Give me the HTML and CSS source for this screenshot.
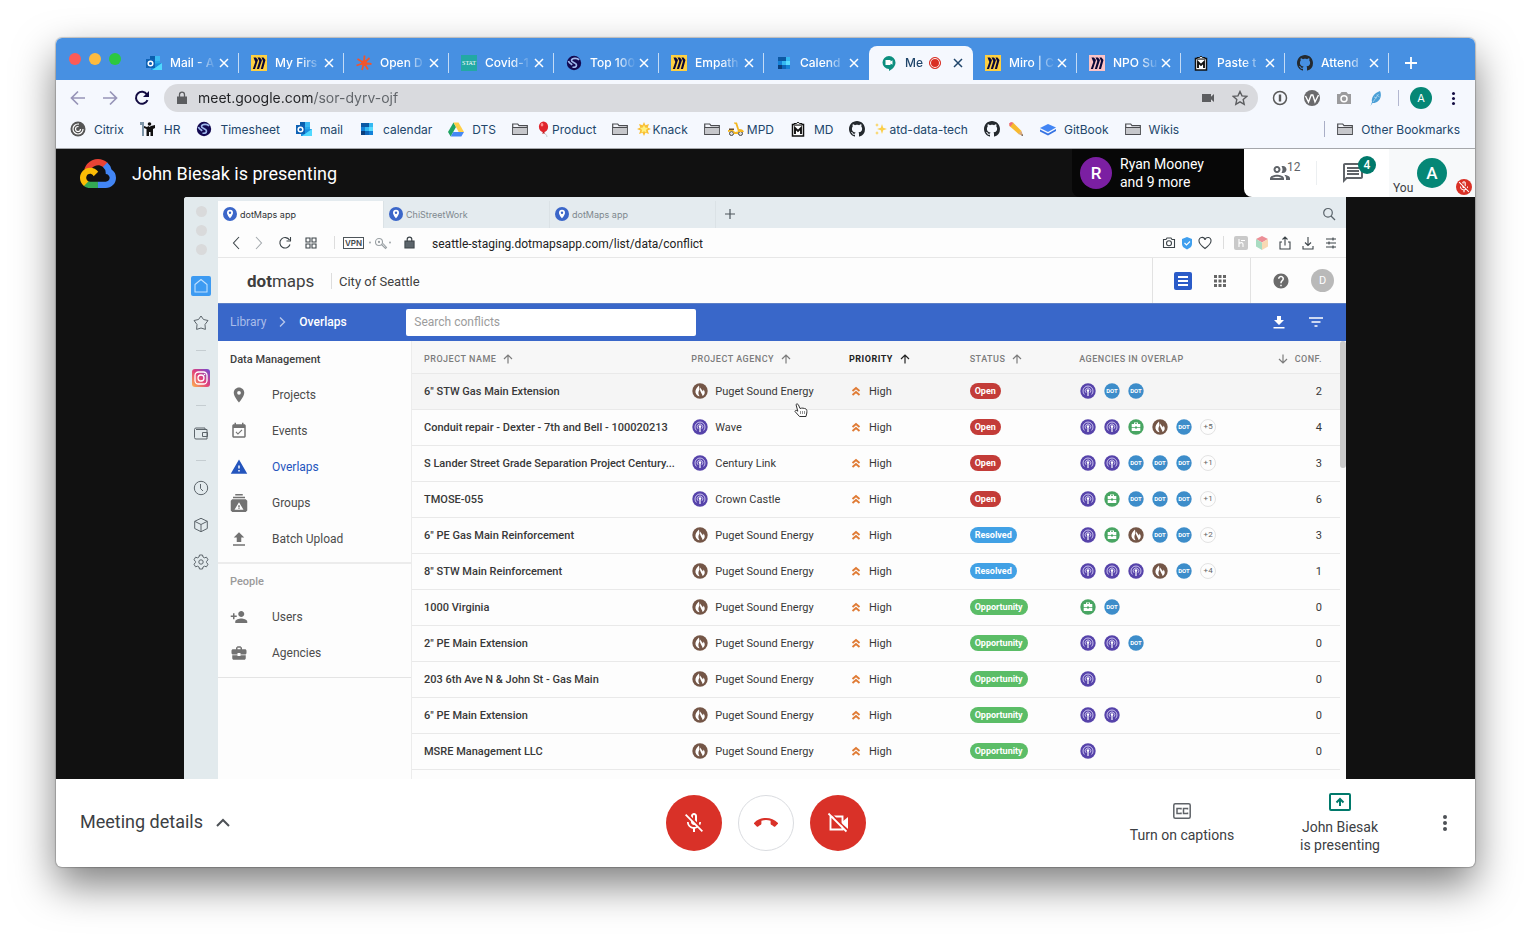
FILE: index.html
```html
<!DOCTYPE html>
<html lang="en">
<head>
<meta charset="utf-8">
<title>Meet - sor-dyrv-ojf</title>
<link rel="stylesheet" href="styles.css">
</head>
<body>
<svg class="defs" aria-hidden="true">
  <defs>
    <symbol id="x" viewBox="0 0 10 10"><path d="M1 1l8 8M9 1l-8 8" stroke="currentColor" stroke-width="1.5" fill="none"/></symbol>
    <symbol id="outlook" viewBox="0 0 16 16"><path d="M4 1h10v9H4z" fill="#28a8ea"/><path d="M4 1h5v5H4z" fill="#0a5fae"/><path d="M9 1h5v5H9z" fill="#3cb9f3"/><path d="M5 9l11-1v7H5z" fill="#1a8ee0"/><path d="M6 15l10-7v7z" fill="#50d9ff"/><path d="M0 4h9v9H0z" fill="#0f62b5"/><circle cx="4.5" cy="8.500" r="2.300" fill="none" stroke="#fff" stroke-width="1.500"/></symbol>
    <symbol id="miro" viewBox="0 0 16 16"><path d="M2.500 2.500h2.500L7 5l-3 9H1.800l2.500-7zM6.500 2.500H9L11 5 8 14H5.800l2.500-8zM10.500 2.500h2L14.500 5 12 14H9.800L12 6z" fill="#0b0838"/></symbol>
    <symbol id="hub" viewBox="0 0 16 16"><path d="M8 8L8.500.500M8 8l5.500-5M8 8l7.500 1M8 8l4 6.500M8 8l-2 7M8 8L.500 10.500M8 8L1.500 4" stroke="#f2552c" stroke-width="1.800"/><circle cx="8" cy="8" r="2.800" fill="#f2552c"/></symbol>
    <symbol id="globe" viewBox="0 0 16 16"><circle cx="8" cy="8" r="7.200" fill="#130a52"/><path d="M13 5C11.500 2.500 6 3 5.500 5.200S10.500 7.500 10.500 10 8 12.500 6.500 12M2.500 6c1 3 2.500 2 3.500 4" fill="none" stroke="#9fb8ec" stroke-width="1.700"/></symbol>
    <symbol id="cal" viewBox="0 0 16 16"><path d="M2 2h12v12H2z" fill="#1482d8"/><path d="M2 2h8v4H2z" fill="#0c59a4"/><path d="M10 2h4v4h-4zM6 6h4v4H6z" fill="#35b8f1"/><path d="M10 6h4v4h-4z" fill="#58dcff"/><path d="M2 10h4v4H2z" fill="#0a3f7d"/><path d="M6 10h4v4H6z" fill="#0d66ba"/></symbol>
    <symbol id="meet" viewBox="0 0 16 16"><path d="M8 1a6.500 6.500 0 0 0 0 13v2c3-1.500 6.500-4.500 6.500-8.500A6.500 6.500 0 0 0 8 1z" fill="#0d8f7f"/><path d="M4.500 5h5v1.500l2-1.200v4.400l-2-1.200V10h-5z" fill="#fff"/></symbol>
    <symbol id="mark" viewBox="0 0 16 16"><path d="M2.500 3.500h11V15h-11z" fill="#fff" stroke="#111" stroke-width="1.500"/><path d="M4 4V2.500h2.500a1.600 1.600 0 0 1 3 0H12V4z" fill="#fff" stroke="#111"/><path d="M5 13V7l3 3 3-3v6" fill="none" stroke="#111" stroke-width="1.900"/></symbol>
    <symbol id="github" viewBox="0 0 16 16"><path d="M8 0C3.580 0 0 3.580 0 8c0 3.540 2.290 6.530 5.470 7.590.4.070.55-.17.55-.38 0-.19-.01-.82-.01-1.490-2.010.37-2.530-.49-2.690-.94-.09-.23-.48-.94-.82-1.130-.28-.15-.68-.52-.01-.53.63-.01 1.080.58 1.230.82.72 1.210 1.870.87 2.330.66.07-.52.28-.87.51-1.070-1.780-.2-3.640-.89-3.640-3.950 0-.87.31-1.590.82-2.150-.08-.2-.36-1.020.08-2.120 0 0 .67-.21 2.200.82.64-.18 1.320-.27 2-.27s1.360.09 2 .27c1.530-1.040 2.200-.82 2.200-.82.44 1.100.16 1.920.08 2.120.51.56.82 1.270.82 2.150 0 3.070-1.870 3.750-3.650 3.950.29.25.54.73.54 1.480 0 1.070-.01 1.930-.01 2.200 0 .21.15.46.55.38A8.010 8.010 0 0 0 16 8c0-4.420-3.580-8-8-8z" fill="#24292e"/></symbol>
    <symbol id="citrix" viewBox="0 0 16 16"><circle cx="8" cy="8" r="7.500" fill="#555"/><circle cx="8" cy="8" r="5" fill="none" stroke="#fff" stroke-width="1.200" stroke-dasharray="24 8"/><circle cx="8" cy="8" r="2.500" fill="none" stroke="#fff" stroke-width="1.200" stroke-dasharray="12 4"/></symbol>
    <symbol id="hr" viewBox="0 0 16 16"><path d="M0 1h4v14H2V4H0z" fill="#7d95a8"/><path d="M4 5l3 1 1.500-1 1 1 1.500-1 4-1v3l-2 1v7h-2.500v-4H9v4H6.500V8L4 7z" fill="#111"/><circle cx="9.500" cy="3" r="1.800" fill="#111"/></symbol>
    <symbol id="drive" viewBox="0 0 16 16"><path d="M5.500 1.500L0 11l2.700 4.500L8 6z" fill="#1fa463"/><path d="M5.500 1.500h5L16 11h-5.300z" fill="#ffcf48"/><path d="M5.300 11H16l-2.700 4.500H2.700z" fill="#4688f4"/></symbol>
    <symbol id="folder" viewBox="0 0 16 16"><path d="M.7 13.500V3h5l1.300 1.700h8.300v8.800z" fill="#f4f6fb" stroke="#4b4c50" stroke-width="1.200"/><path d="M1.300 6.500h13.400v6.400H1.300z" fill="#c6c7cb"/><path d="M.7 6.500h14.600" stroke="#4b4c50"/></symbol>
    <symbol id="balloon" viewBox="0 0 14 16"><path d="M7 11c0 2 3 2 3 5" fill="none" stroke="#aaa" stroke-width=".6"/><path d="M6 11L5 12.500h3L7 11z" fill="#b9161b"/><ellipse cx="6.500" cy="5.800" rx="4.600" ry="5.400" fill="#e0242b"/><ellipse cx="5" cy="3.800" rx="1.300" ry="1.800" fill="#ff8d8d"/></symbol>
    <symbol id="sun" viewBox="0 0 14 16"><path d="M7 1l1.500 3.300L12 3l-1.300 3.500L14 8l-3.300 1.500L12 13l-3.500-1.300L7 15l-1.500-3.300L2 13l1.300-3.500L0 8l3.300-1.500L2 3l3.500 1.300z" fill="#f9bf36"/><path d="M7 4l1.200 2.600 2.800.3L9 8.900l.6 2.800L7 10.300l-2.600 1.400.6-2.800-2-2 2.800-.3z" fill="#fff07c"/></symbol>
    <symbol id="scooter" viewBox="0 0 16 16"><circle cx="3.500" cy="12.500" r="2" fill="#ddd" stroke="#444"/><circle cx="12.500" cy="12.500" r="2" fill="#ddd" stroke="#444"/><path d="M0 9h5l2 2 3-.5L7.500 3 6 2.500V1.500h3L11 8c2.500-.3 4.500 1 5 3H10v2H6L4.500 10 0 11z" fill="#f4b720"/><path d="M1 7.500h5V9H1z" fill="#6a4a28"/></symbol>
    <symbol id="sparkle" viewBox="0 0 14 16"><path d="M8 3l1.200 3.800L13 8l-3.800 1.200L8 13 6.800 9.200 3 8l3.800-1.200zM3 2l.6 1.600L5 4l-1.400.5L3 6l-.6-1.500L1 4l1.400-.4zM3 10l.6 1.600L5 12l-1.400.5L3 14l-.6-1.500L1 12l1.400-.4z" fill="#fbcf4a"/></symbol>
    <symbol id="pencil" viewBox="0 0 16 16"><path d="M2.500 2L5 1.500l8.500 8.500-3 3L1.500 5z" fill="#f7b92f"/><path d="M1.500 5L1 2.500 3 1l2.300.8L2.500 5.500z" fill="#ee6e78"/><path d="M13.500 10L15 15l-4.800-2z" fill="#d9a878"/><path d="M14.300 13L15 15l-1.700-.8z" fill="#333"/></symbol>
    <symbol id="gitbook" viewBox="0 0 16 16"><path d="M0 7l8-4 8 3.500L8 11z" fill="#4285f4"/><path d="M0 8.500l8 4 8-4.500v2L8 14.500l-8-4z" fill="#3472e2"/></symbol>
    <symbol id="lock" viewBox="0 0 12 14"><path d="M1 5.500h10V13H1z"/><path d="M3.500 6V3.700a2.500 2.500 0 0 1 5 0V6" fill="none" stroke="currentColor" stroke-width="1.300"/></symbol>
    <symbol id="micoff" viewBox="0 0 24 24"><path d="M19 11h-1.700c0 .74-.16 1.430-.43 2.050l1.230 1.230c.56-.98.9-2.090.9-3.280zM15 5c0-1.660-1.340-3-3-3S9 3.340 9 5v.200l6 6zM11 5a1 1 0 0 1 2 0v4.200l-2-2zM4.270 3L3 4.270l6 6V11c0 1.660 1.340 3 3 3 .22 0 .44-.03.65-.08l1.660 1.660c-.71.33-1.500.52-2.310.52-2.760 0-5.300-2.100-5.300-5.100H5c0 3.410 2.720 6.230 6 6.720V21h2v-3.280c.91-.13 1.770-.45 2.540-.9L19.730 21 21 19.730z"/></symbol>
    <symbol id="pin" viewBox="0 0 24 24"><path d="M12 2C8.130 2 5 5.130 5 9c0 5.250 7 13 7 13s7-7.750 7-13c0-3.870-3.130-7-7-7zm0 9.500a2.500 2.500 0 1 1 0-5 2.500 2.500 0 0 1 0 5z"/></symbol>
    <symbol id="case" viewBox="0 0 24 24"><path d="M10 16v-1H3v4c0 1.110.89 2 2 2h14c1.110 0 2-.89 2-2v-4h-7v1h-4zm10-9h-4V5l-2-2h-4L8 5v2H4c-1.100 0-2 .9-2 2v3c0 1.110.89 2 2 2h6v-2h4v2h6c1.100 0 2-.9 2-2V9c0-1.100-.9-2-2-2zm-6 0h-4V5h4v2z"/></symbol>
    <symbol id="dotpin" viewBox="0 0 14 14"><circle cx="7" cy="7" r="7" fill="#3b66c9"/><path d="M7 2.700a3 3 0 0 0-3 3C4 8 7 11.300 7 11.300S10 8 10 5.700a3 3 0 0 0-3-3z" fill="#fff"/><circle cx="7" cy="5.800" r="1.200" fill="#3b66c9"/></symbol>
    <symbol id="up" viewBox="0 0 10 10"><path d="M5 9.500V1M1 5l4-4 4 4" fill="none" stroke="currentColor" stroke-width="1.200"/></symbol>
    <symbol id="down" viewBox="0 0 10 10"><path d="M5 .5V9M1 5l4 4 4-4" fill="none" stroke="currentColor" stroke-width="1.200"/></symbol>
    <symbol id="high" viewBox="0 0 10 10"><path d="M1.500 5L5 2l3.500 3M1.500 9L5 6l3.500 3" fill="none" stroke="#e07b35" stroke-width="1.900"/></symbol>
    <symbol id="wave" viewBox="0 0 16 16"><circle cx="8" cy="8" r="7.700" fill="#5643aa"/><path d="M4.400 11.500a5 5 0 1 1 7.200 0M6 9.800a2.800 2.800 0 1 1 4 0" fill="none" stroke="#d6cff4" stroke-width=".9"/><circle cx="8" cy="7.500" r="1.200" fill="#fff"/><path d="M7.400 8h1.200v5H7.400z" fill="#fff"/></symbol>
    <symbol id="fire" viewBox="0 0 16 16"><circle cx="8" cy="8" r="7.700" fill="#745647"/><path d="M7 2.500C4.500 5 3 7 3.500 9.500S6 13 7.500 13.300C6 11 6 9 7.500 6.500z" fill="#fff"/><path d="M8 4.500l3 4 .5-2c2 2.500 1.500 5-1 6.500C10.500 10.500 7.500 9 8 4.500z" fill="#fff"/></symbol>
    <symbol id="dot" viewBox="0 0 16 16"><circle cx="8" cy="8" r="7.700" fill="#3d8dca"/><text x="8" y="10" text-anchor="middle" class="dot-text">DOT</text></symbol>
    <symbol id="work" viewBox="0 0 16 16"><circle cx="8" cy="8" r="7.700" fill="#48a562"/><path d="M6 5V3.500h4V5h2.300v3H9V7.500H7V8H3.700V5zm1 0h2v-.700H7zM3.700 8.700H7v.8h2v-.8h3.300V12H3.700z" fill="#fff"/></symbol>
  </defs>
</svg>

<div class="window">
  <header class="chrome">
    <div class="tabstrip">
      <div class="lights"><i class="red"></i><i class="amber"></i><i class="green"></i></div>
      <nav class="tabs">
        <a class="tab" href="#"><svg class="i16"><use href="#outlook"/></svg><span>Mail - A</span><svg class="i10"><use href="#x"/></svg></a>
        <a class="tab" href="#"><svg class="i16 yellow"><use href="#miro"/></svg><span>My Firs</span><svg class="i10"><use href="#x"/></svg></a>
        <a class="tab" href="#"><svg class="i16"><use href="#hub"/></svg><span>Open D</span><svg class="i10"><use href="#x"/></svg></a>
        <a class="tab" href="#"><b class="i16 stat">STAT</b><span>Covid-1</span><svg class="i10"><use href="#x"/></svg></a>
        <a class="tab" href="#"><svg class="i16"><use href="#globe"/></svg><span>Top 100</span><svg class="i10"><use href="#x"/></svg></a>
        <a class="tab" href="#"><svg class="i16 yellow"><use href="#miro"/></svg><span>Empath</span><svg class="i10"><use href="#x"/></svg></a>
        <a class="tab last" href="#"><svg class="i16"><use href="#cal"/></svg><span>Calend</span><svg class="i10"><use href="#x"/></svg></a>
        <a class="tab narrow active" href="#" aria-current="page"><svg class="i16"><use href="#meet"/></svg><span>Me</span><i class="rec"></i><svg class="i10"><use href="#x"/></svg></a>
        <a class="tab narrow" href="#"><svg class="i16 yellow"><use href="#miro"/></svg><span>Miro | C</span><svg class="i10"><use href="#x"/></svg></a>
        <a class="tab narrow" href="#"><svg class="i16 pink"><use href="#miro"/></svg><span>NPO Su</span><svg class="i10"><use href="#x"/></svg></a>
        <a class="tab narrow" href="#"><svg class="i16"><use href="#mark"/></svg><span>Paste t</span><svg class="i10"><use href="#x"/></svg></a>
        <a class="tab narrow" href="#"><svg class="i16"><use href="#github"/></svg><span>Attend</span><svg class="i10"><use href="#x"/></svg></a>
      </nav>
      <button class="newtab" aria-label="New tab"><svg viewBox="0 0 12 12"><path d="M6 0v12M0 6h12" stroke="currentColor" stroke-width="1.800"/></svg></button>
    </div>

    <div class="toolbar">
      <div class="nav">
        <button class="faded" aria-label="Back"><svg viewBox="0 0 16 16"><path d="M15 8H2M8 1.500L1.500 8 8 14.500" fill="none" stroke="currentColor" stroke-width="1.700"/></svg></button>
        <button class="faded" aria-label="Forward"><svg viewBox="0 0 16 16"><path d="M1 8h13M8 1.500L14.500 8 8 14.500" fill="none" stroke="currentColor" stroke-width="1.700"/></svg></button>
        <button aria-label="Reload"><svg viewBox="0 0 16 16"><path d="M13.500 10.200A6 6 0 1 1 13 4.500" fill="none" stroke="currentColor" stroke-width="2"/><path d="M15 1v6H9z" fill="currentColor"/></svg></button>
      </div>
      <div class="omnibox">
        <svg class="lock"><use href="#lock"/></svg>
        <input type="text" aria-label="Address" value="meet.google.com/sor-dyrv-ojf">
        <svg class="i16" viewBox="0 0 16 16"><path d="M2 4h9v2.800L14 4v8l-3-2.800V12H2z" fill="#5c5d60"/></svg>
        <svg class="i16" viewBox="0 0 16 16"><path d="M8 1.500l2 4.400 4.700.5-3.500 3.200 1 4.700L8 11.900l-4.200 2.400 1-4.700L1.300 6.400 6 5.900z" fill="none" stroke="#5c5d60" stroke-width="1.400"/></svg>
      </div>
      <div class="exts">
        <svg class="i16" viewBox="0 0 16 16"><circle cx="8" cy="8" r="6.500" fill="none" stroke="#5a5a5a" stroke-width="1.500"/><path d="M6.800 4.500h2.400v7H6.800z" fill="#5a5a5a"/></svg>
        <svg class="i16" viewBox="0 0 16 16"><circle cx="8" cy="8" r="8" fill="#6a6a6c"/><path d="M1.500 6l3 6 2.700-7h1.600l2.200 7 3.500-7" fill="none" stroke="#fff" stroke-width="1.400"/></svg>
        <svg class="i16" viewBox="0 0 16 16"><path d="M1 4h3l1.500-2h5L12 4h3v10H1z" fill="#9b9b9d"/><circle cx="8" cy="8.800" r="3" fill="none" stroke="#fff" stroke-width="1.500"/></svg>
        <svg class="i16" viewBox="0 0 16 16"><path d="M12 1c2 4 .5 9-3 11-2 1-3 1-4.500 1l-2 3 1.500-4C3 8 6 3 12 1z" fill="#4a9fd6"/><path d="M10.500 4L5 12M6 7l3 1M8.500 5l3 2" stroke="#b8dcf3" stroke-width=".7"/></svg>
      </div>
      <b class="me">A</b>
      <button class="menu" aria-label="Chrome menu"><i></i><i></i><i></i></button>
    </div>

    <nav class="bookmarks">
      <a href="#"><svg class="i16"><use href="#citrix"/></svg>Citrix</a>
      <a href="#"><svg class="i16"><use href="#hr"/></svg>HR</a>
      <a href="#"><svg class="i16"><use href="#globe"/></svg>Timesheet</a>
      <a href="#"><svg class="i16"><use href="#outlook"/></svg>mail</a>
      <a href="#"><svg class="i16"><use href="#cal"/></svg>calendar</a>
      <a href="#"><svg class="i16"><use href="#drive"/></svg>DTS</a>
      <a href="#"><svg class="i16"><use href="#folder"/></svg><span><svg class="emoji"><use href="#balloon"/></svg>Product</span></a>
      <a href="#"><svg class="i16"><use href="#folder"/></svg><span><svg class="emoji"><use href="#sun"/></svg>Knack</span></a>
      <a href="#"><svg class="i16"><use href="#folder"/></svg><span class="spaced"><svg class="emoji"><use href="#scooter"/></svg>MPD</span></a>
      <a href="#"><svg class="i16"><use href="#mark"/></svg>MD</a>
      <a href="#"><svg class="i16"><use href="#github"/></svg><span><svg class="emoji"><use href="#sparkle"/></svg>atd-data-tech</span></a>
      <a href="#" aria-label="Edit"><svg class="i16"><use href="#github"/></svg><svg class="i16"><use href="#pencil"/></svg></a>
      <a href="#"><svg class="i16"><use href="#gitbook"/></svg>GitBook</a>
      <a href="#"><svg class="i16"><use href="#folder"/></svg>Wikis</a>
      <a class="other" href="#"><svg class="i16"><use href="#folder"/></svg>Other Bookmarks</a>
    </nav>
  </header>

  <main class="stage">
    <div class="stagebar">
      <svg class="gcp" viewBox="0 0 256 206"><path fill="#ea4335" d="M170.252 56.819l22.253-22.253 1.483-9.370C153.437-11.677 88.976-7.496 52.420 33.920 42.267 45.423 34.734 59.764 30.717 74.573l7.970-1.123 44.505-7.340 3.436-3.513c19.797-21.742 53.270-24.667 76.128-6.168z"/><path fill="#4285f4" d="M224.205 73.918a100.249 100.249 0 0 0-30.217-48.722l-31.232 31.232a55.515 55.515 0 0 1 20.379 44.037v5.544c15.351 0 27.797 12.445 27.797 27.796 0 15.352-12.446 27.485-27.797 27.485h-55.671l-5.466 5.934v33.340l5.466 5.231h55.670c39.930.311 72.553-31.494 72.864-71.424a72.303 72.303 0 0 0-31.793-60.453"/><path fill="#34a853" d="M71.870 205.796h55.593V161.290H71.870a27.275 27.275 0 0 1-11.400-2.498l-7.887 2.420-22.409 22.253-1.952 7.574c12.567 9.489 27.900 14.825 43.647 14.757"/><path fill="#fbbc05" d="M71.870 61.425C31.940 61.664-.237 94.228.001 134.158a72.301 72.301 0 0 0 28.222 56.880l32.248-32.246c-13.990-6.322-20.208-22.786-13.887-36.776 6.320-13.990 22.786-20.208 36.775-13.888a27.796 27.796 0 0 1 13.887 13.888l32.248-32.248A72.224 72.224 0 0 0 71.870 61.425"/></svg>
      <h1>John Biesak is presenting</h1>
      <div class="speaker"><b class="avatar purple">R</b><p>Ryan Mooney<br>and 9 more</p></div>
      <div class="panel">
        <button aria-label="Show everyone"><svg class="i24" viewBox="0 0 24 24"><path fill="#5f6368" d="M9 13.750c-2.340 0-7 1.170-7 3.500V19h14v-1.750c0-2.330-4.660-3.500-7-3.500zM4.340 17c.84-.58 2.870-1.250 4.660-1.250s3.820.67 4.660 1.250H4.340zM9 12c1.930 0 3.500-1.570 3.500-3.500S10.930 5 9 5 5.500 6.570 5.500 8.500 7.070 12 9 12zm0-5c.83 0 1.500.67 1.500 1.500S9.830 10 9 10s-1.500-.67-1.500-1.500S8.170 7 9 7zm7.040 6.810c1.160.84 1.960 1.960 1.960 3.440V19h4v-1.750c0-2.020-3.500-3.170-5.960-3.440zM15 12c1.930 0 3.500-1.570 3.500-3.500S16.930 5 15 5c-.54 0-1.040.13-1.500.35.63.89 1 1.980 1 3.150s-.37 2.260-1 3.150c.46.22.96.35 1.500.35z"/></svg><span class="count">12</span></button>
        <button aria-label="Chat"><svg class="i24" viewBox="0 0 24 24"><path fill="#5f6368" d="M4 4h16v12H5.170L4 17.170V4m0-2c-1.100 0-2 .9-2 2v18l4-4h14c1.100 0 2-.9 2-2V4c0-1.100-.9-2-2-2H4zm2 10h12v2H6v-2zm0-3h12v2H6V9zm0-3h12v2H6V6z"/></svg><span class="badge">4</span></button>
      </div>
      <div class="you"><span>You</span><b class="avatar teal">A</b><i class="muted"><svg><use href="#micoff"/></svg></i></div>
    </div>

    <section class="screen">
      <aside class="rail">
        <div class="raildots"><i></i><i></i><i></i></div>
        <div class="slot"><svg class="home" viewBox="0 0 20 20"><rect width="20" height="20" rx="2" fill="#3d9bf2"/><path d="M4 16V8.500L10 3.500l6 5V16z" fill="none" stroke="#bfe0ff" stroke-width="1.100" stroke-linejoin="round"/></svg></div>
        <div class="slot"><svg class="i16" viewBox="0 0 16 16"><path d="M8 1l2.500 3.500 4.500 1-3 4 .4 4.900L8 13l-4.400 1.400.4-4.900-3-4 4.500-1z"/></svg></div>
        <hr>
        <div class="slot"><svg class="insta" viewBox="0 0 18 18"><defs><linearGradient id="ig" x1="0" y1="1" x2="1" y2="0"><stop offset="0" stop-color="#fdb64d"/><stop offset=".5" stop-color="#e0407c"/><stop offset="1" stop-color="#6b4bd6"/></linearGradient></defs><rect width="18" height="18" rx="3" fill="url(#ig)"/><g fill="none" stroke="#fff" stroke-width="1.300"><rect x="3" y="3" width="12" height="12" rx="3.500"/><circle cx="9" cy="9" r="3"/></g><circle cx="12.500" cy="5.500" r=".8" fill="#fff"/></svg></div>
        <hr>
        <div class="slot"><svg class="i16" viewBox="0 0 16 16"><path d="M12 4.500V3H3a1.500 1.500 0 0 0-1.500 1.500v8A1.500 1.500 0 0 0 3 14h11V4.500H3M9.500 7.500h5v4h-5z"/></svg></div>
        <hr>
        <div class="slot"><svg class="i16" viewBox="0 0 16 16"><circle cx="8" cy="8" r="6.700"/><path d="M7.500 4v4.500L10 11"/></svg></div>
        <div class="slot"><svg class="i16" viewBox="0 0 16 16"><path d="M8 1.300l6.300 3v7.200L8 14.700l-6.300-3.200V4.300zM1.700 4.300L8 7.500l6.300-3.200M8 7.500v7"/></svg></div>
        <div class="slot"><svg class="i16" viewBox="0 0 16 16"><circle cx="8" cy="8" r="2.200"/><path d="M6.500 1h3l.5 2 1.500.8 2-.6L15 5.800 13.600 7.300v1.400L15 10.200l-1.500 2.600-2-.6-1.500.8-.5 2h-3L6 13l-1.500-.8-2 .6L1 10.200l1.400-1.500V7.300L1 5.800l1.500-2.600 2 .6L6 3z"/></svg></div>
      </aside>

      <div class="app">
        <nav class="subtabs">
          <a class="on" href="#"><svg class="i14"><use href="#dotpin"/></svg>dotMaps app</a>
          <a href="#"><svg class="i14"><use href="#dotpin"/></svg>ChiStreetWork</a>
          <a href="#"><svg class="i14"><use href="#dotpin"/></svg>dotMaps app</a>
          <button aria-label="New tab"><svg class="i10"  viewBox="0 0 10 10"><path d="M5 0v10M0 5h10" stroke="#4c555b" stroke-width="1.200"/></svg></button>
          <svg class="i14 find" viewBox="0 0 14 14"><circle cx="6" cy="5.800" r="4.300" fill="none" stroke="#59636a" stroke-width="1.200"/><path d="M9 9l4 4" stroke="#59636a" stroke-width="1.300"/></svg>
        </nav>

        <div class="subbar">
          <button aria-label="Back"><svg class="i14" viewBox="0 0 14 14"><path d="M9 1L3.500 7 9 13"/></svg></button>
          <button class="dim" aria-label="Forward"><svg class="i14" viewBox="0 0 14 14"><path d="M5 1l5.500 6L5 13"/></svg></button>
          <button class="wide" aria-label="Reload"><svg class="i14" viewBox="0 0 14 14"><path d="M12 8.500A5.200 5.200 0 1 1 11.500 4M12.500 1v4h-4"/></svg></button>
          <button class="wide" aria-label="Speed dial"><svg class="i14" viewBox="0 0 14 14"><path d="M2 2h4v4H2zM8 2h4v4H8zM2 8h4v4H2zM8 8h4v4H8z"/></svg></button>
          <span class="rule"></span>
          <b class="vpn">VPN</b>
          <svg class="key" viewBox="0 0 24 14"><circle cx="11" cy="6" r="3.500"/><path d="M13.500 8.500l4 4 1-1-3.500-4"/><circle cx="11" cy="6" r=".6"/><circle cx="2" cy="6.500" r=".4"/><circle cx="22" cy="6.500" r=".4"/></svg>
          <svg class="lock2"><use href="#lock"/></svg>
          <input type="text" aria-label="Page address" value="seattle-staging.dotmapsapp.com/list/data/conflict">
          <div class="tools">
            <svg class="i14" viewBox="0 0 14 14"><path d="M1.500 3.500h2.500l1-1.500h4l1 1.500h2.500v8h-11z"/><circle cx="7" cy="7.300" r="2.500"/></svg>
            <svg class="i14" viewBox="0 0 14 14"><path d="M7 1l5 2v5c0 2.500-2 4-5 5.500C4 12 2 10.500 2 8V3z" fill="#3f9fee" stroke="none"/><path d="M4.500 7l2 2 3.500-3.500" stroke="#fff"/></svg>
            <svg class="i14" viewBox="0 0 14 14"><path d="M7 12.500C3 9.500 1 7.500 1 5a3 3 0 0 1 6-1 3 3 0 0 1 6 1c0 2.500-2 4.500-6 7.500z"/></svg>
            <span class="rule"></span>
            <svg class="i14" viewBox="0 0 14 14"><rect width="14" height="14" rx="2" fill="#c9c9c9" stroke="none"/><path d="M5 3v8M5 7.500c3-1.500 4-1 4 1V11M7 4.500h4" stroke="#fff"/></svg>
            <svg class="i14" viewBox="0 0 14 14"><g stroke="none"><path d="M7 0l6 3-6 3.500L1 3z" fill="#ec8f97"/><path d="M1 3l6 3.500V14l-6-3.500z" fill="#a9dcc2"/><path d="M13 3L7 6.500V14l6-3.500z" fill="#f8d9b4"/></g></svg>
            <svg class="i14" viewBox="0 0 14 14"><path d="M4 6H2v7h10V6h-2M7 9.500V1M4.500 3.500L7 1l2.500 2.500"/></svg>
            <svg class="i14" viewBox="0 0 14 14"><path d="M2 10v3h10v-3M7 1v8.500M4 6.500l3 3 3-3"/></svg>
            <svg class="i14" viewBox="0 0 14 14"><path d="M2 3h10M2 7h10M2 11h10M9 1.500v3M5 5.500v3M9 9.500v3"/></svg>
          </div>
        </div>

        <div class="brandbar">
          <strong class="brand"><b>dot</b>maps</strong>
          <span class="city">City of Seattle</span>
          <div class="modes">
            <button aria-label="List view"><svg class="list" viewBox="0 0 18 18"><rect width="18" height="18" rx="2" fill="#2a5bc8"/><path d="M4 5h10M4 9h10M4 13h10" stroke="#fff" stroke-width="1.800"/></svg></button>
            <button aria-label="Grid view"><svg class="i14" viewBox="0 0 14 14"><path fill="#666" d="M1 1h3v3H1zM5.500 1h3v3h-3zM10 1h3v3h-3zM1 5.500h3v3H1zM5.500 5.500h3v3h-3zM10 5.500h3v3h-3zM1 10h3v3H1zM5.500 10h3v3h-3zM10 10h3v3h-3z"/></svg></button>
          </div>
          <div class="account">
            <button aria-label="Help"><svg class="i18" viewBox="0 0 24 24"><path fill="#6b6b6b" d="M12 2C6.480 2 2 6.480 2 12s4.480 10 10 10 10-4.480 10-10S17.520 2 12 2zm1 17h-2v-2h2v2zm2.070-7.750l-.9.920C13.450 12.900 13 13.500 13 15h-2v-.5c0-1.100.45-2.100 1.170-2.830l1.240-1.260c.37-.36.59-.86.59-1.410 0-1.100-.9-2-2-2s-2 .9-2 2H8c0-2.210 1.790-4 4-4s4 1.790 4 4c0 .88-.36 1.680-.93 2.250z"/></svg></button>
            <button class="user" aria-label="Account">D</button>
          </div>
        </div>

        <div class="crumbs">
          <a href="#">Library</a>
          <svg class="i10" viewBox="0 0 10 10"><path d="M3 .5L7.500 5 3 9.500" fill="none" stroke="#b8c7ea" stroke-width="1.400"/></svg>
          <strong>Overlaps</strong>
          <input type="search" placeholder="Search conflicts" aria-label="Search conflicts">
          <button class="export" aria-label="Download"><svg class="i14" viewBox="0 0 14 14"><path d="M5 1h4v4h3L7 10 2 5h3zM1.500 12h11v1.500h-11z" fill="#fff"/></svg></button>
          <button aria-label="Filter"><svg class="i16" viewBox="0 0 16 16"><path d="M1 4h14M3.500 8h9M6.500 12h3" stroke="#fff" stroke-width="1.500"/></svg></button>
        </div>

        <div class="body">
          <nav class="side">
            <h2>Data Management</h2>
            <a href="#"><svg class="i18"><use href="#pin"/></svg>Projects</a>
            <a href="#"><svg class="i18" viewBox="0 0 24 24"><path d="M16.530 11.060L15.470 10l-4.880 4.880-2.120-2.120-1.060 1.060L10.590 17l5.940-5.940zM19 3h-1V1h-2v2H8V1H6v2H5c-1.110 0-2 .9-2 2v14c0 1.100.89 2 2 2h14c1.100 0 2-.9 2-2V5c0-1.100-.9-2-2-2zm0 16H5V8h14v11z"/></svg>Events</a>
            <a class="current" href="#"><svg class="i18" viewBox="0 0 24 24"><path d="M1 21h22L12 2 1 21zm12-3h-2v-2h2v2zm0-4h-2v-4h2v4z"/></svg>Overlaps</a>
            <a href="#"><svg class="i18" viewBox="0 0 24 24"><path d="M7 0h10v2H7zM4 3.500h16v2H4zM3 7h18l2 2v13l-2 2H3l-2-2V9zm9 4l-6 10h12zm-1 4h2v3h-2zm0 4h2v1h-2z" fill-rule="evenodd"/></svg>Groups</a>
            <a href="#"><svg class="i18" viewBox="0 0 24 24"><path d="M9 16h6v-6h4l-7-7-7 7h4zM4 19h16v2H4z"/></svg>Batch Upload</a>
            <h2 class="muted-head">People</h2>
            <a href="#"><svg class="i18" viewBox="0 0 24 24"><path d="M15 12c2.210 0 4-1.790 4-4s-1.790-4-4-4-4 1.790-4 4 1.790 4 4 4zm-9-2V7H4v3H1v2h3v3h2v-3h3v-2H6zm9 4c-2.670 0-8 1.340-8 4v2h16v-2c0-2.660-5.330-4-8-4z"/></svg>Users</a>
            <a href="#"><svg class="i18"><use href="#case"/></svg>Agencies</a>
          </nav>

          <div class="tablebox">
            <table>
              <colgroup><col class="c1"><col class="c2"><col class="c3"><col class="c4"><col class="c5"><col class="c6"></colgroup>
              <thead><tr>
                <th>PROJECT NAME <svg class="i10"><use href="#up"/></svg></th>
                <th>PROJECT AGENCY <svg class="i10"><use href="#up"/></svg></th>
                <th class="sorted">PRIORITY <svg class="i10"><use href="#up"/></svg></th>
                <th>STATUS <svg class="i10"><use href="#up"/></svg></th>
                <th>AGENCIES IN OVERLAP</th>
                <th class="num"><svg class="i10"><use href="#down"/></svg> CONF.</th>
              </tr></thead>
              <tbody>
                <tr class="hover"><td>6" STW Gas Main Extension</td><td><svg class="i16"><use href="#fire"/></svg>Puget Sound Energy</td><td><svg class="pr"><use href="#high"/></svg>High</td><td><mark class="open">Open</mark></td><td class="ag"><svg class="i16"><use href="#wave"/></svg><svg class="i16"><use href="#dot"/></svg><svg class="i16"><use href="#dot"/></svg></td><td>2</td></tr>
                <tr><td>Conduit repair - Dexter - 7th and Bell - 100020213</td><td><svg class="i16"><use href="#wave"/></svg>Wave</td><td><svg class="pr"><use href="#high"/></svg>High</td><td><mark class="open">Open</mark></td><td class="ag"><svg class="i16"><use href="#wave"/></svg><svg class="i16"><use href="#wave"/></svg><svg class="i16"><use href="#work"/></svg><svg class="i16"><use href="#fire"/></svg><svg class="i16"><use href="#dot"/></svg><i class="more">+5</i></td><td>4</td></tr>
                <tr><td>S Lander Street Grade Separation Project Century...</td><td><svg class="i16"><use href="#wave"/></svg>Century Link</td><td><svg class="pr"><use href="#high"/></svg>High</td><td><mark class="open">Open</mark></td><td class="ag"><svg class="i16"><use href="#wave"/></svg><svg class="i16"><use href="#wave"/></svg><svg class="i16"><use href="#dot"/></svg><svg class="i16"><use href="#dot"/></svg><svg class="i16"><use href="#dot"/></svg><i class="more">+1</i></td><td>3</td></tr>
                <tr><td>TMOSE-055</td><td><svg class="i16"><use href="#wave"/></svg>Crown Castle</td><td><svg class="pr"><use href="#high"/></svg>High</td><td><mark class="open">Open</mark></td><td class="ag"><svg class="i16"><use href="#wave"/></svg><svg class="i16"><use href="#work"/></svg><svg class="i16"><use href="#dot"/></svg><svg class="i16"><use href="#dot"/></svg><svg class="i16"><use href="#dot"/></svg><i class="more">+1</i></td><td>6</td></tr>
                <tr><td>6" PE Gas Main Reinforcement</td><td><svg class="i16"><use href="#fire"/></svg>Puget Sound Energy</td><td><svg class="pr"><use href="#high"/></svg>High</td><td><mark class="resolved">Resolved</mark></td><td class="ag"><svg class="i16"><use href="#wave"/></svg><svg class="i16"><use href="#work"/></svg><svg class="i16"><use href="#fire"/></svg><svg class="i16"><use href="#dot"/></svg><svg class="i16"><use href="#dot"/></svg><i class="more">+2</i></td><td>3</td></tr>
                <tr><td>8" STW Main Reinforcement</td><td><svg class="i16"><use href="#fire"/></svg>Puget Sound Energy</td><td><svg class="pr"><use href="#high"/></svg>High</td><td><mark class="resolved">Resolved</mark></td><td class="ag"><svg class="i16"><use href="#wave"/></svg><svg class="i16"><use href="#wave"/></svg><svg class="i16"><use href="#wave"/></svg><svg class="i16"><use href="#fire"/></svg><svg class="i16"><use href="#dot"/></svg><i class="more">+4</i></td><td>1</td></tr>
                <tr><td>1000 Virginia</td><td><svg class="i16"><use href="#fire"/></svg>Puget Sound Energy</td><td><svg class="pr"><use href="#high"/></svg>High</td><td><mark class="opp">Opportunity</mark></td><td class="ag"><svg class="i16"><use href="#work"/></svg><svg class="i16"><use href="#dot"/></svg></td><td>0</td></tr>
                <tr><td>2" PE Main Extension</td><td><svg class="i16"><use href="#fire"/></svg>Puget Sound Energy</td><td><svg class="pr"><use href="#high"/></svg>High</td><td><mark class="opp">Opportunity</mark></td><td class="ag"><svg class="i16"><use href="#wave"/></svg><svg class="i16"><use href="#wave"/></svg><svg class="i16"><use href="#dot"/></svg></td><td>0</td></tr>
                <tr><td>203 6th Ave N &amp; John St - Gas Main</td><td><svg class="i16"><use href="#fire"/></svg>Puget Sound Energy</td><td><svg class="pr"><use href="#high"/></svg>High</td><td><mark class="opp">Opportunity</mark></td><td class="ag"><svg class="i16"><use href="#wave"/></svg></td><td>0</td></tr>
                <tr><td>6" PE Main Extension</td><td><svg class="i16"><use href="#fire"/></svg>Puget Sound Energy</td><td><svg class="pr"><use href="#high"/></svg>High</td><td><mark class="opp">Opportunity</mark></td><td class="ag"><svg class="i16"><use href="#wave"/></svg><svg class="i16"><use href="#wave"/></svg></td><td>0</td></tr>
                <tr><td>MSRE Management LLC</td><td><svg class="i16"><use href="#fire"/></svg>Puget Sound Energy</td><td><svg class="pr"><use href="#high"/></svg>High</td><td><mark class="opp">Opportunity</mark></td><td class="ag"><svg class="i16"><use href="#wave"/></svg></td><td>0</td></tr>
              </tbody>
            </table>
            <svg class="cursor" viewBox="0 0 14 15"><path d="M2 1.500c1-1 2-.5 2.500.5L6 5.500c2-.8 4-.3 6 .5 1 .6 1 2 .8 4L12 13.500H5.500L1 8.500c0-1 1-1.500 2-.8l.8.5z" fill="#fff" stroke="#333"/><path d="M6.500 8v3M8.500 8v3M10.500 8v3" stroke="#777" stroke-width=".8"/></svg>
          </div>
          <div class="scroll"><i></i></div>
        </div>
      </div>
    </section>
  </main>

  <footer class="callbar">
    <button class="details"><span>Meeting details</span><svg class="i16" viewBox="0 0 16 16"><path d="M2 11l6-6 6 6" fill="none" stroke="#4d5156" stroke-width="2"/></svg></button>
    <div class="calls">
      <button class="round" aria-label="Turn on microphone"><svg class="i24"><use href="#micoff"/></svg></button>
      <button class="round plain" aria-label="Leave call"><svg class="i24" viewBox="0 0 24 24"><path d="M12 9c-1.600 0-3.150.25-4.600.72v3.100c0 .39-.23.74-.56.9-.98.49-1.870 1.120-2.660 1.850-.18.18-.43.28-.7.28-.28 0-.53-.11-.71-.29L.29 13.080a1 1 0 0 1 0-1.410C3.340 8.780 7.460 7 12 7s8.660 1.780 11.710 4.670a1 1 0 0 1 0 1.420l-2.480 2.480c-.18.18-.43.29-.71.29-.27 0-.52-.11-.7-.28-.79-.74-1.690-1.360-2.670-1.850-.33-.16-.56-.5-.56-.9v-3.100C15.150 9.250 13.600 9 12 9z"/></svg></button>
      <button class="round" aria-label="Turn on camera"><svg class="i24" viewBox="0 0 24 24"><path d="M4.500 5.500v13h12v-13zM2.500 2.500l18 18" fill="none" stroke="#fff" stroke-width="1.900"/><path d="M16 11l6-5v12l-6-5z"/><path d="M4 1.500l19 19" stroke="#d93128" stroke-width="1.500"/></svg></button>
    </div>
    <div class="actions">
      <button class="act"><svg class="cc" viewBox="0 0 18 16"><rect x=".8" y=".8" width="16.400" height="14.400" rx="1.500" fill="none" stroke="#5f6368" stroke-width="1.500"/><path d="M8 6.500V5.500H4v5h4v-1M14.500 6.500V5.500h-4v5h4v-1" fill="none" stroke="#5f6368" stroke-width="1.500"/></svg>Turn on captions</button>
      <button class="act"><svg class="present" viewBox="0 0 22 18"><rect x="1" y="1" width="20" height="16" rx="1" fill="none" stroke="#00796b" stroke-width="2"/><path d="M11 13V6M7.500 9.500L11 6l3.500 3.500" fill="none" stroke="#00796b" stroke-width="2"/></svg>John Biesak<br>is presenting</button>
      <button class="menu big" aria-label="More options"><i></i><i></i><i></i></button>
    </div>
  </footer>
</div>
</body>
</html>
```
FILE: styles.css
```css
* { box-sizing: border-box; }
body { margin: 0; padding: 38px 56px 74px; background: #fff; font-family: Roboto, "Liberation Sans", sans-serif; color: #3c4043; }
.defs { position: absolute; width: 0; height: 0; }
button { border: 0; padding: 0; background: none; font: inherit; color: inherit; display: flex; align-items: center; justify-content: center; }
a { color: inherit; text-decoration: none; }
input { border: 0; padding: 0; background: none; outline: 0; min-width: 0; font: inherit; }
svg { display: block; flex: none; fill: currentColor; }
h1, h2, p { margin: 0; font-weight: 400; }
.i10 { width: 10px; height: 10px; }
.i14 { width: 14px; height: 14px; }
.i16 { width: 16px; height: 16px; }
.i18 { width: 18px; height: 18px; }
.i24 { width: 24px; height: 24px; }

.window { border-radius: 6px; overflow: hidden; background: #fff; box-shadow: 0 0 1px 1px rgba(0,0,0,.2), 0 18px 40px rgba(0,0,0,.5); }

/* Browser chrome */
.chrome { font-family: Inter, sans-serif; background: #f5f8fe; border-bottom: 1px solid #a5a7ab; }
.tabstrip { display: flex; height: 42px; background: #4790e2; color: #fff; }
.lights { display: flex; gap: 8px; width: 78px; padding: 15px 0 0 13px; flex: none; }
.lights i { width: 12px; height: 12px; border-radius: 50%; }
.red { background: #fc5b57; }
.amber { background: #fdbb40; }
.green { background: #2cc840; }
.tabs { flex: 0 1 1255px; display: flex; min-width: 0; padding-top: 8px; }
.tab { flex: 0 1 105px; min-width: 0; display: flex; align-items: center; padding: 0 10px 0 12px; position: relative; font-size: 12px; font-weight: 500; }
.tab.narrow { flex-basis: 104px; }
.tab::after { content: ""; position: absolute; right: 0; top: 7px; width: 1px; height: 20px; background: #c3dbf6; }
.tab span { flex: 1; min-width: 0; margin: 0 2px 0 8px; padding-bottom: 2px; white-space: nowrap; mask-image: linear-gradient(90deg, #000 26px, transparent 46px); }
.tab.active { background: #f5f8fe; color: #21466b; border-radius: 8px 8px 0 0; }
.tab.active::after, .tab.last::after { content: none; }
.rec { flex: none; width: 12px; height: 12px; margin-right: 12px; border: 1px solid #d93025; border-radius: 50%; background: #d93025; box-shadow: inset 0 0 0 1px #fff; }
.yellow { background: #fed041; }
.pink { background: #fbc3c6; }
.stat { background: #22a9a4; font: 6px/16px "Liberation Serif", serif; text-align: center; }
.newtab { width: 44px; padding-top: 8px; flex: none; }
.newtab svg { width: 12px; height: 12px; }

.toolbar { display: flex; align-items: center; height: 36px; color: #130c42; }
.nav { display: flex; gap: 16px; padding: 0 14px; }
.nav svg { width: 16px; height: 16px; }
.faded { color: #9794b8; }
.omnibox { flex: 1; display: flex; align-items: center; gap: 16px; height: 28px; padding: 0 10px 0 12px; border-radius: 14px; background: #d9dade; }
.omnibox input { flex: 1; padding-bottom: 2px; font-size: 14px; margin-left: -6px; color: transparent; background: linear-gradient(90deg, #202124 116px, #5f6368 116px); background-clip: text; }
.lock { width: 12px; height: 14px; color: #5c5d60; }
.exts { display: flex; gap: 16px; margin-right: 11px; padding: 0 14px; border-right: 1px solid #b3b7d0; }
.me { width: 22px; height: 22px; border-radius: 50%; background: #058776; color: #fff; font-size: 11px; font-weight: 400; line-height: 22px; text-align: center; }
.menu { flex-direction: column; gap: 2px; width: 43px; height: 24px; }
.menu i { width: 3px; height: 3px; border-radius: 50%; background: currentColor; }
.bookmarks { display: flex; align-items: center; gap: 16px; height: 32px; padding: 0 15px 6px 14px; font-size: 12px; color: #21466b; white-space: nowrap; }
.bookmarks a, .bookmarks span { display: flex; align-items: center; }
.bookmarks a { gap: 8px; }
.emoji { width: 16px; height: 16px; }
.spaced { gap: 3px; }
.other { margin-left: auto; padding-left: 12px; border-left: 1px solid #a9aec6; }

/* Meeting stage */
.stage { background: #111; }
.stagebar { display: flex; align-items: center; height: 48px; padding-left: 24px; color: #fff; }
.gcp { width: 36px; height: 29px; }
.stagebar h1 { flex: 1; margin-left: 16px; font-size: 18px; }
.speaker { display: flex; align-items: center; gap: 8px; width: 180px; height: 48px; margin-right: -8px; padding-left: 8px; background: #070707; border-radius: 0 0 0 8px; font-size: 14px; line-height: 18px; }
.avatar { display: block; width: 32px; height: 32px; border-radius: 50%; font-size: 17px; font-weight: 500; line-height: 32px; text-align: center; color: #fff; }
.purple { background: #7b1fa2; }
.teal { width: 30px; height: 30px; line-height: 30px; background: #058776; }
.panel { display: flex; align-items: center; width: 145px; height: 48px; border-radius: 0 0 0 8px; background: #fff; }
.panel button { flex: 1; position: relative; height: 24px; color: #5f6368; }
.panel button + button { border-left: 1px solid #eceff1; }
.count { position: absolute; left: 43px; top: -1px; font-size: 12px; }
.badge { position: absolute; left: 41px; top: -5px; width: 18px; height: 18px; border-radius: 50%; background: #00796b; color: #fff; font-size: 12px; font-weight: 500; line-height: 18px; }
.you { position: relative; display: flex; align-items: center; gap: 4px; width: 86px; height: 48px; padding-left: 4px; background: #f7f9fa; color: #3c4043; font-size: 12px; }
.you span { width: 20px; padding-top: 29px; }
.muted { position: absolute; right: 3px; bottom: 2px; width: 16px; height: 16px; padding: 1px; border-radius: 50%; background: #d93025; color: #fff; }
.muted svg { width: 14px; height: 14px; }

/* Shared screen */
.screen { display: flex; height: 582px; margin: 0 129px 0 128px; background: #fdfdfd; border-radius: 3px 0 0; overflow: hidden; }
.rail { width: 34px; flex: none; background: #e2eaed; color: #5c656b; }
.raildots { display: flex; flex-direction: column; align-items: center; gap: 8px; height: 70px; padding-top: 9px; }
.raildots i { width: 11px; height: 11px; border-radius: 50%; background: #d9dadb; }
.slot { display: flex; align-items: center; justify-content: center; height: 37px; }
.slot .i16 { fill: none; stroke: #5c656b; stroke-width: 1; }
.home { width: 20px; height: 20px; }
.insta { width: 18px; height: 18px; }
.rail hr { width: 10px; height: 1px; margin: 9px auto 8px; border: 0; background: #c5cdd1; }
.app { flex: 1; min-width: 0; display: flex; flex-direction: column; color: #3f3f3f; }
.subtabs { display: flex; align-items: flex-end; height: 31px; background: #e4ebef; font-family: Inter, sans-serif; font-size: 9px; color: #7e888e; }
.subtabs a { display: flex; align-items: center; gap: 3px; width: 166px; height: 27px; padding: 0 0 1px 5px; border-right: 1px solid #dbe2e6; }
.subtabs .on { background: #fdfdfd; color: #2d3235; }
.subtabs button { width: 28px; height: 27px; padding-bottom: 2px; }
.find { margin: 0 10px 7px auto; }
.subbar { display: flex; align-items: center; height: 30px; padding-left: 12px; border-bottom: 1px solid #e7e7e7; color: #3c4449; }
.subbar button { width: 21px; height: 24px; padding-right: 7px; }
.subbar .wide { width: 26px; padding: 0; }
.subbar .dim { color: #a3a9ad; }
.subbar svg { fill: none; stroke: currentColor; stroke-width: 1.1; }
.rule { width: 1px; height: 13px; background: #ddd; margin-left: 10px; }
.vpn { height: 12px; margin-left: 8px; padding: 0 1px; border: 1px solid #4d5459; font-family: Inter, sans-serif; font-size: 8px; line-height: 10px; font-weight: 600; }
.key { width: 24px; height: 14px; margin-left: 4px; color: #9aa0a4; }
.subbar .lock2 { width: 11px; height: 13px; margin: 0 17px 0 12px; fill: #5c656b; }
.subbar input { flex: 1; padding-top: 2px; font-size: 12px; color: #222; }
.tools { display: flex; align-items: center; gap: 4px; padding-right: 8px; }
.tools .rule { margin: 0 6px 0 7px; }
.tools .rule ~ svg { margin-right: 5px; }
.tools svg:last-child { margin-right: 0; }
.tools .rule + svg { margin-right: 3px; }
.brandbar { display: flex; align-items: center; height: 45px; padding-left: 29px; }
.brand { width: 84px; font-size: 17px; font-weight: 400; }
.brand b { font-weight: 700; }
.city { padding: 2px 0 0 7px; border-left: 1px solid #ddd; font-size: 13px; line-height: 14px; }
.modes { display: flex; align-items: center; gap: 21px; width: 99px; height: 45px; margin-left: auto; padding-left: 21px; border: solid #e2e2e2; border-width: 0 1px; }
.list { width: 18px; height: 18px; }
.account { display: flex; align-items: center; gap: 21px; padding: 0 12px 0 21px; }
.user { width: 23px; height: 23px; border-radius: 50%; background: #b9b9b9; color: #fff; font-size: 11px; }
.crumbs { display: flex; align-items: center; height: 38px; padding: 0 22px 0 12px; background: #3967c9; color: #fff; font-size: 12px; box-shadow: inset 0 1px #5c7fc7; }
.crumbs > a { color: #a9bdea; }
.crumbs > .i10 { margin: 0 12px 0 11px; }
.crumbs strong { flex: none; width: 107px; font-weight: 500; }
.crumbs input { width: 290px; height: 27px; padding: 0 8px; border-radius: 2px; background: #fff; font-size: 12px; }
.crumbs input::placeholder { color: #9c9c9c; }
.export { margin: 0 22px 0 auto; }
.body { flex: 1; min-height: 0; display: flex; }
.side { width: 194px; flex: none; border-right: 1px solid #ececec; font-size: 12px; }
.side h2 { height: 36px; padding-left: 12px; font-size: 11px; font-weight: 500; line-height: 38px; }
.side .muted-head { height: 37px; margin-top: 5px; border-top: 2px solid #ececec; color: #9a9a9a; line-height: 36px; }
.side a { display: flex; align-items: center; gap: 24px; height: 36px; padding-left: 12px; color: #4c4c4c; }
.side a svg { color: #727272; }
.side a:last-child { height: 43px; padding-bottom: 7px; border-bottom: 1px solid #e4e4e4; }
.side .current, .side .current svg { color: #2455bd; }
.tablebox { flex: 1; min-width: 0; position: relative; overflow: hidden; }
table { width: 100%; border-collapse: collapse; table-layout: fixed; font-size: 11px; line-height: 18px; color: #383838; }
.c1 { width: 28.8%; }
.c2 { width: 17%; }
.c3 { width: 13%; }
.c4 { width: 11.8%; }
.c5 { width: 19.4%; }
.c6 { width: 10%; }
th, td { padding: 2px 0 0 12px; border-bottom: 1px solid #e9e9e9; text-align: left; white-space: nowrap; overflow: hidden; }
td { height: 36px; }
th { height: 32px; padding-top: 4px; background: #f7f7f7; color: #7c7c7c; font-size: 9px; font-weight: 500; line-height: 10px; letter-spacing: .5px; }
th svg, td svg { display: inline-block; vertical-align: top; }
th svg { margin: 0 4px; }
.sorted { color: #222; font-weight: 700; }
th:last-child, td:last-child { padding-left: 0; padding-right: 18px; text-align: right; }
td:first-child { font-weight: 500; }
td > .i16:first-child { margin: 0 7px 0 1px; }
.hover td { background: #f5f5f5; }
.pr { width: 10px; height: 10px; margin: 3px 8px 0 2px; }
mark { display: inline-block; height: 16px; padding: 0 5px; border-radius: 8px; color: #fff; font-size: 9px; font-weight: 700; line-height: 16px; vertical-align: top; }
.open { background: #c33c38; }
.resolved { background: #41a1e5; }
.opp { background: #5bbd67; }
td.ag { padding-left: 13px; }
td.ag > svg, td.ag > svg:first-child { margin: 0 8px 0 0; }
.dot-text { font: 700 6px Roboto, sans-serif; fill: #fff; }
.more { display: inline-block; width: 16px; height: 16px; border: 1px solid #e3e3e3; border-radius: 50%; font-size: 8px; line-height: 14px; font-style: normal; text-align: center; vertical-align: top; color: #666; }
.cursor { position: absolute; left: 382px; top: 62px; width: 14px; height: 15px; }
.scroll { width: 6px; background: #fafafa; }
.scroll i { display: block; height: 127px; border-radius: 3px; background: #cacaca; }

/* Call controls */
.callbar { display: grid; grid-template-columns: 1fr auto 1fr; align-items: center; height: 88px; }
.details { justify-self: start; gap: 12px; padding-left: 24px; font-size: 18px; }
.details span { padding-bottom: 3px; }
.calls { display: flex; gap: 16px; }
.round { width: 56px; height: 56px; border-radius: 50%; background: #d93128; color: #fff; }
.plain { background: #fff; border: 1px solid #dadce0; color: #d93128; }
.actions { display: flex; align-items: center; justify-content: flex-end; padding-right: 4px; }
.act { display: block; width: 158px; font-size: 14px; line-height: 18px; text-align: center; }
.act svg { margin: 0 auto 7px; }
.cc { width: 18px; height: 16px; }
.present { width: 22px; height: 18px; }
.big { width: 52px; color: #4d5156; }
.big i { width: 4px; height: 4px; }
```
